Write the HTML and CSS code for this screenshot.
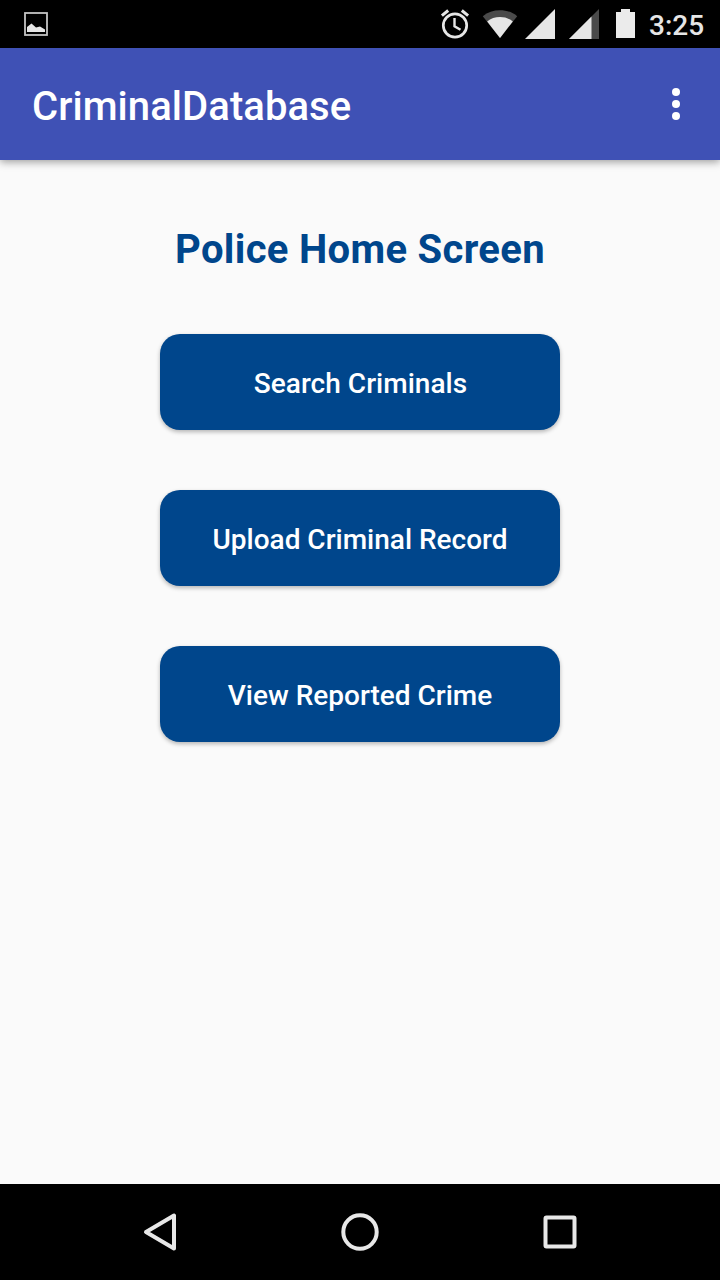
FILE: index.html
```html
<!DOCTYPE html>
<html lang="en">
<head>
<meta charset="utf-8">
<title>CriminalDatabase</title>
<link rel="stylesheet" href="styles.css">
</head>
<body>
<div class="screen">
  <div class="status-bar">
    <svg class="notification" width="24" height="24" viewBox="0 0 24 24">
      <rect x="1" y="1" width="22" height="22" fill="none" stroke="#c4c4c4" stroke-width="1.800"/>
      <path d="M3 20v-5l4.500-3.500 4.500 4 4-1 5 3V20z" fill="#e6e6e6"/>
    </svg>
    <div class="status-icons">
      <svg class="alarm" width="30" height="32" viewBox="440 8 30 32" fill="none" stroke="#e6e6e6" stroke-width="2.700">
        <circle cx="455" cy="25.500" r="11.700"/>
        <path d="M454.500 18v8.200l6 3.600" stroke-width="2.400"/>
        <path d="M441.900 15.700l6.300-5.200M461.800 10.500l6.300 5.200" stroke-width="3"/>
      </svg>
      <svg class="wifi" width="36" height="32" viewBox="482 8 36 32">
        <path d="M500 38L482.800 16.200C492 8.300 508 8.300 517.200 16.200z" fill="#4a4a4a"/>
        <path d="M500 38L487.200 21.500C494 15.600 506 15.600 512.800 21.500z" fill="#e6e6e6"/>
      </svg>
      <svg class="signal" width="30" height="30" viewBox="0 0 30 30"><path d="M30 0v30H0z" fill="#e6e6e6"/></svg>
      <svg class="signal-second" width="30" height="30" viewBox="0 0 30 30"><path d="M30 0v30H0z" fill="#4a4a4a"/><path d="M22.500 7.500V30H0z" fill="#e6e6e6"/></svg>
      <svg class="battery" width="19" height="29" viewBox="0 0 19 29"><path d="M5 0h9v3h5v26H0V3h5z" fill="#ebebeb"/></svg>
      <span class="clock">3:25</span>
    </div>
  </div>
  <header class="app-bar">
    <h1 class="app-title">CriminalDatabase</h1>
    <svg class="overflow" width="8" height="32" viewBox="0 0 8 32" fill="#fff"><circle cx="4" cy="4" r="4"/><circle cx="4" cy="16" r="4"/><circle cx="4" cy="28" r="4"/></svg>
  </header>
  <main class="content">
    <h2 class="heading">Police Home Screen</h2>
    <button class="action action-search">Search Criminals</button>
    <button class="action">Upload Criminal Record</button>
    <button class="action">View Reported Crime</button>
  </main>
  <nav class="nav-bar">
    <svg width="40" height="40" viewBox="0 0 40 40" fill="none" stroke="#e8e8e8" stroke-width="4" stroke-linejoin="round"><path d="M34 3.500v33L6 20z"/></svg>
    <svg width="40" height="40" viewBox="0 0 40 40" fill="none" stroke="#e8e8e8" stroke-width="4"><circle cx="20" cy="20" r="16.700"/></svg>
    <svg width="40" height="40" viewBox="0 0 40 40" fill="none" stroke="#e8e8e8" stroke-width="4"><rect x="5.500" y="5.500" width="29" height="29" rx="1"/></svg>
  </nav>
</div>
</body>
</html>
```
FILE: styles.css
```css
* { box-sizing: border-box; }
body { margin: 0; font-family: Roboto, sans-serif; }
svg { display: block; flex: none; }
.screen { width: 720px; height: 1280px; display: flex; flex-direction: column; background: #fafafa; overflow: hidden; }
.status-bar { height: 48px; flex: none; background: #000; display: flex; align-items: center; justify-content: space-between; padding: 0 16px 0 24px; }
.status-icons { display: flex; align-items: center; }
.alarm { margin-right: 12px; }
.wifi { margin-right: 7px; }
.signal { margin-right: 14px; }
.signal-second { margin-right: 17px; }
.battery { margin: 0 14px 1px 0; }
.clock { width: 55px; font-size: 28px; font-weight: 500; line-height: 32px; padding-top: 4px; color: #e6e6e6; white-space: nowrap; }
.app-bar { height: 112px; flex: none; background: #3f51b5; display: flex; align-items: center; justify-content: space-between; padding: 0 40px 0 32px; box-shadow: 0 2px 8px rgba(0, 0, 0, 0.38); }
.app-title { margin: 6px 0 0; font-size: 40px; line-height: 48px; font-weight: 500; letter-spacing: 0.07px; color: #fff; }
.content { flex: 1; display: flex; flex-direction: column; align-items: center; padding-top: 66px; }
.heading { margin: 0 0 60px; font-size: 40px; line-height: 48px; font-weight: 700; letter-spacing: 0.32px; color: #00468c; }
.action { width: 400px; height: 96px; margin: 0 0 60px; padding: 3px 0 0; border: 0; border-radius: 20px; background: #00468c; color: #fff; font: 500 28px/32px Roboto, sans-serif; box-shadow: 0 2px 4px rgba(0, 0, 0, 0.28); }
.action-search { padding-left: 1px; letter-spacing: 0.03px; }
.nav-bar { height: 96px; flex: none; background: #000; display: flex; align-items: center; justify-content: space-between; padding: 0 140px; }
```
